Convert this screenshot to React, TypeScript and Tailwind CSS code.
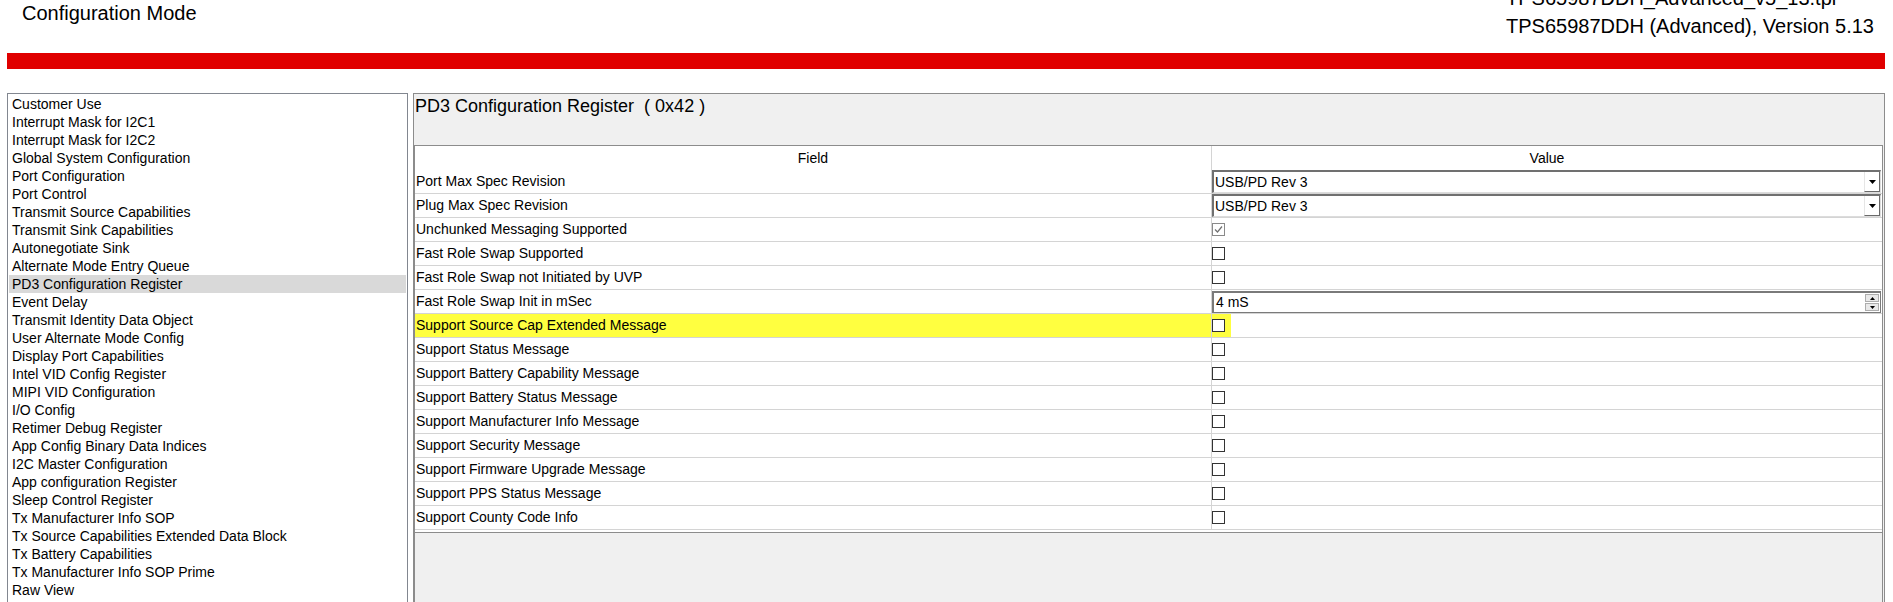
import React, { useState } from 'react';

const registers = [
  'Customer Use',
  'Interrupt Mask for I2C1',
  'Interrupt Mask for I2C2',
  'Global System Configuration',
  'Port Configuration',
  'Port Control',
  'Transmit Source Capabilities',
  'Transmit Sink Capabilities',
  'Autonegotiate Sink',
  'Alternate Mode Entry Queue',
  'PD3 Configuration Register',
  'Event Delay',
  'Transmit Identity Data Object',
  'User Alternate Mode Config',
  'Display Port Capabilities',
  'Intel VID Config Register',
  'MIPI VID Configuration',
  'I/O Config',
  'Retimer Debug Register',
  'App Config Binary Data Indices',
  'I2C Master Configuration',
  'App configuration Register',
  'Sleep Control Register',
  'Tx Manufacturer Info SOP',
  'Tx Source Capabilities Extended Data Block',
  'Tx Battery Capabilities',
  'Tx Manufacturer Info SOP Prime',
  'Raw View',
];

type Field = {
  label: string;
  kind: 'select' | 'check' | 'spin';
  value?: string;
  checked?: boolean;
  highlight?: boolean;
};

const fields: Field[] = [
  { label: 'Port Max Spec Revision', kind: 'select', value: 'USB/PD Rev 3' },
  { label: 'Plug Max Spec Revision', kind: 'select', value: 'USB/PD Rev 3' },
  { label: 'Unchunked Messaging Supported', kind: 'check', checked: true },
  { label: 'Fast Role Swap Supported', kind: 'check' },
  { label: 'Fast Role Swap not Initiated by UVP', kind: 'check' },
  { label: 'Fast Role Swap Init in mSec', kind: 'spin', value: '4 mS' },
  { label: 'Support Source Cap Extended Message', kind: 'check', highlight: true },
  { label: 'Support Status Message', kind: 'check' },
  { label: 'Support Battery Capability Message', kind: 'check' },
  { label: 'Support Battery Status Message', kind: 'check' },
  { label: 'Support Manufacturer Info Message', kind: 'check' },
  { label: 'Support Security Message', kind: 'check' },
  { label: 'Support Firmware Upgrade Message', kind: 'check' },
  { label: 'Support PPS Status Message', kind: 'check' },
  { label: 'Support County Code Info', kind: 'check' },
];

const CheckBox = ({ checked }: { checked?: boolean }) => (
  <div
    className={`w-[13px] h-[13px] bg-white border ${checked ? 'border-[#8a8a8a]' : 'border-[#333333]'}`}
  >
    {checked && (
      <svg width="11" height="11" viewBox="0 0 11 11">
        <path d="M2 5.5 L4.5 8 L9 2.5" fill="none" stroke="#707070" strokeWidth="1.2" />
      </svg>
    )}
  </div>
);

const Select = ({ value }: { value?: string }) => (
  <div className="flex h-[23px] w-full mr-px bg-white border-t-2 border-l-2 border-t-[#707070] border-l-[#707070] border-b border-r border-b-[#dcdcdc] border-r-[#dcdcdc]">
    <span className="flex-1 pl-px leading-[20px]">{value}</span>
    <div className="w-[16px] flex items-center justify-center border-l border-l-[#e6e6e6] border-r border-b border-r-[#6a6a6a] border-b-[#6a6a6a]">
      <svg width="7" height="4" viewBox="0 0 7 4">
        <path d="M0 0 H7 L3.5 4 Z" fill="#000" />
      </svg>
    </div>
  </div>
);

const Spinner = ({ value }: { value?: string }) => (
  <div className="flex h-[22px] w-full mr-px bg-white border border-[#7a7a7a] border-t-2 border-l-2">
    <span className="flex-1 pl-[2px] leading-[18px]">{value}</span>
    <div className="w-[14px] flex flex-col gap-px py-px mr-px">
      <div className="flex-1 bg-[#e9e9e9] border border-[#adadad] flex items-center justify-center">
        <svg width="5" height="3" viewBox="0 0 5 3">
          <path d="M0 3 H5 L2.5 0 Z" fill="#000" />
        </svg>
      </div>
      <div className="flex-1 bg-[#e9e9e9] border border-[#adadad] flex items-center justify-center">
        <svg width="5" height="3" viewBox="0 0 5 3">
          <path d="M0 0 H5 L2.5 3 Z" fill="#000" />
        </svg>
      </div>
    </div>
  </div>
);

const App = () => {
  const [selected, setSelected] = useState('PD3 Configuration Register');

  return (
    <div
      className="w-[1893px] h-[602px] overflow-hidden bg-white text-black flex flex-col"
      style={{ fontFamily: '"Liberation Sans", Arial, sans-serif' }}
    >
      {/* Header */}
      <header className="h-[53px] flex justify-between shrink-0">
        <div className="pl-[22px] pt-[3px] text-[20px] leading-[20px]">Configuration Mode</div>
        <div className="w-[387px] shrink-0 -mt-[16px] text-[20px] leading-[28px]">
          <div>TPS65987DDH_Advanced_v5_13.tpl</div>
          <div>TPS65987DDH (Advanced), Version 5.13</div>
        </div>
      </header>
      <div className="h-[16px] bg-[#e00000] ml-[7px] mr-[8px] shrink-0" />

      <div className="flex flex-1 gap-[5px] pl-[7px] pr-[8px] pt-[24px] min-h-0">
        {/* Register list */}
        <aside className="w-[401px] h-[540px] shrink-0 border border-[#828790] p-px text-[14px]">
          <ul>
            {registers.map((name) => (
              <li
                key={name}
                onClick={() => setSelected(name)}
                className={`h-[18px] leading-[18px] pl-[3px] cursor-pointer whitespace-nowrap ${selected === name ? 'bg-[#d9d9d9]' : ''}`}
              >
                {name}
              </li>
            ))}
          </ul>
        </aside>

        {/* Register detail */}
        <main className="flex-1 h-[540px] border border-[#8c8c8c] bg-[#f0f0f0] flex flex-col">
          <div className="h-[51px] shrink-0 pt-[2px] pl-px text-[18px] leading-[20px] whitespace-pre">
            {'PD3 Configuration Register  ( 0x42 )'}
          </div>
          <div className="flex-1 mr-px border-l border-t border-r border-[#8c8c8c] text-[14px]">
            <div className="bg-white pb-[2px] border-b border-[#8c8c8c]">
              <div className="flex h-[24px]">
                <div className="w-[797px] shrink-0 border-r border-[#d4d4d4] flex items-center justify-center">Field</div>
                <div className="flex-1 flex items-center justify-center">Value</div>
              </div>
              {fields.map((f) => (
                <div key={f.label} className="flex h-[24px] border-b border-[#d4d4d4]">
                  <div
                    className={`w-[797px] shrink-0 border-r border-[#d4d4d4] flex items-center pl-px ${f.highlight ? 'bg-[#ffff40]' : ''}`}
                  >
                    {f.label}
                  </div>
                  <div className="flex-1 flex items-center">
                    {f.kind === 'select' && <Select value={f.value} />}
                    {f.kind === 'spin' && (
                      <div className="w-full h-full flex items-end">
                        <Spinner value={f.value} />
                      </div>
                    )}
                    {f.kind === 'check' && (
                      <div className={`h-full w-[19px] flex items-center ${f.highlight ? 'bg-[#ffff40]' : ''}`}>
                        <CheckBox checked={f.checked} />
                      </div>
                    )}
                  </div>
                </div>
              ))}
            </div>
          </div>
        </main>
      </div>
    </div>
  );
};

export default App;
